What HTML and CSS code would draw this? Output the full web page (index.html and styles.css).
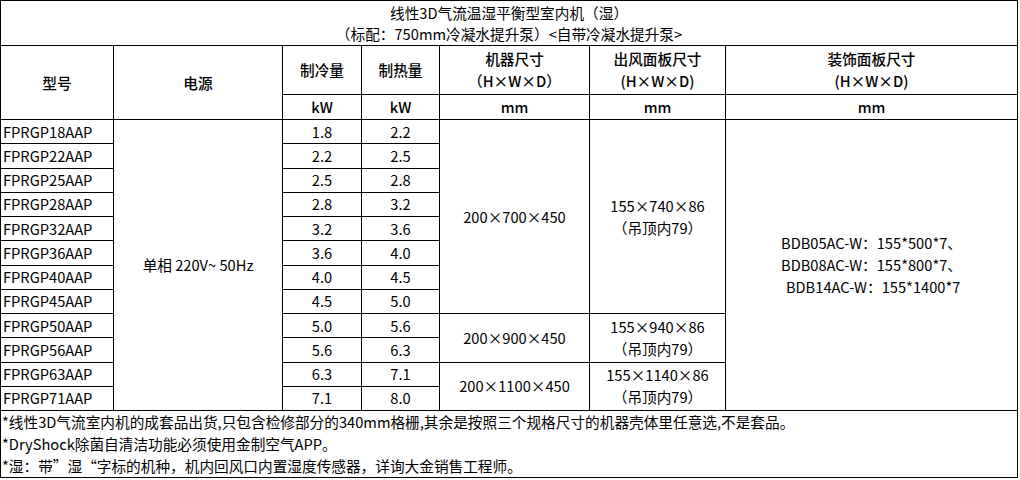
FILE: index.html
```html
<!DOCTYPE html>
<html lang="zh-CN">
<head>
<meta charset="utf-8">
<link rel="stylesheet" href="styles.css">
</head>
<body>
<table class="spec">
  <colgroup>
    <col class="c-model"><col class="c-power"><col class="c-cool"><col class="c-heat"><col class="c-unit"><col class="c-outlet"><col class="c-panel">
  </colgroup>
  <tr class="r-title">
    <td colspan="7">线性3D气流温湿平衡型室内机（湿）<br>（标配：750mm冷凝水提升泵）&lt;自带冷凝水提升泵&gt;</td>
  </tr>
  <tr class="r-head">
    <td rowspan="2" class="hd">型号</td>
    <td rowspan="2" class="hd">电源</td>
    <td class="hd">制冷量</td>
    <td class="hd">制热量</td>
    <td class="hd">机器尺寸<br>（H×W×D）</td>
    <td class="hd">出风面板尺寸<br>(H×W×D)</td>
    <td class="hd">装饰面板尺寸<br>(H×W×D)</td>
  </tr>
  <tr class="r-unit">
    <td class="hd">kW</td>
    <td class="hd">kW</td>
    <td class="hd">mm</td>
    <td class="hd">mm</td>
    <td class="hd">mm</td>
  </tr>
  <tr class="r-data">
    <td class="model">FPRGP18AAP</td>
    <td rowspan="12">单相 220V~ 50Hz</td>
    <td>1.8</td><td>2.2</td>
    <td rowspan="8">200×700×450</td>
    <td rowspan="8">155×740×86<br>（吊顶内79）</td>
    <td rowspan="12" class="panel">BDB05AC-W：155*500*7、<br>BDB08AC-W：155*800*7、<br>&nbsp;BDB14AC-W：155*1400*7</td>
  </tr>
  <tr class="r-data"><td class="model">FPRGP22AAP</td><td>2.2</td><td>2.5</td></tr>
  <tr class="r-data"><td class="model">FPRGP25AAP</td><td>2.5</td><td>2.8</td></tr>
  <tr class="r-data"><td class="model">FPRGP28AAP</td><td>2.8</td><td>3.2</td></tr>
  <tr class="r-data"><td class="model">FPRGP32AAP</td><td>3.2</td><td>3.6</td></tr>
  <tr class="r-data"><td class="model">FPRGP36AAP</td><td>3.6</td><td>4.0</td></tr>
  <tr class="r-data"><td class="model">FPRGP40AAP</td><td>4.0</td><td>4.5</td></tr>
  <tr class="r-data"><td class="model">FPRGP45AAP</td><td>4.5</td><td>5.0</td></tr>
  <tr class="r-data">
    <td class="model">FPRGP50AAP</td><td>5.0</td><td>5.6</td>
    <td rowspan="2">200×900×450</td>
    <td rowspan="2">155×940×86<br>（吊顶内79）</td>
  </tr>
  <tr class="r-data"><td class="model">FPRGP56AAP</td><td>5.6</td><td>6.3</td></tr>
  <tr class="r-data">
    <td class="model">FPRGP63AAP</td><td>6.3</td><td>7.1</td>
    <td rowspan="2">200×1100×450</td>
    <td rowspan="2">155×1140×86<br>（吊顶内79）</td>
  </tr>
  <tr class="r-data"><td class="model">FPRGP71AAP</td><td>7.1</td><td>8.0</td></tr>
  <tr class="r-foot">
    <td colspan="7" class="foot">*线性3D气流室内机的成套品出货,只包含检修部分的340mm格栅,其余是按照三个规格尺寸的机器壳体里任意选,不是套品。<br>*DryShock除菌自清洁功能必须使用金制空气APP。<br>*湿：带”湿“字标的机种，机内回风口内置湿度传感器，详询大金销售工程师。</td>
  </tr>
</table>
</body>
</html>
```

FILE: styles.css
```css
html, body {
  margin: 0;
  padding: 0;
  background: #fff;
}

body {
  font-family: "Noto Sans CJK SC", "Noto Sans", sans-serif;
  font-size: 14.67px;
  color: #000;
}

.spec {
  border-collapse: collapse;
  table-layout: fixed;
  width: 1017px;
}

.c-model { width: 113px; }
.c-power { width: 169px; }
.c-cool { width: 79px; }
.c-heat { width: 78px; }
.c-unit { width: 150px; }
.c-outlet { width: 136px; }
.c-panel { width: 292px; }

.spec td {
  border: 1px solid #000;
  padding: 0;
  text-align: center;
  vertical-align: middle;
  line-height: 22px;
  white-space: nowrap;
}

.r-title td { height: 44px; line-height: 21px; }
.r-head td { height: 48px; }
.r-unit td { height: 24px; }
.r-data td { height: 23.25px; }
.r-foot td { height: 65px; }

.hd { font-weight: 500; }

.spec td.model {
  text-align: left;
  padding-left: 2px;
}

.spec td.foot {
  text-align: left;
  padding-left: 1px;
  line-height: 22px;
}
```
